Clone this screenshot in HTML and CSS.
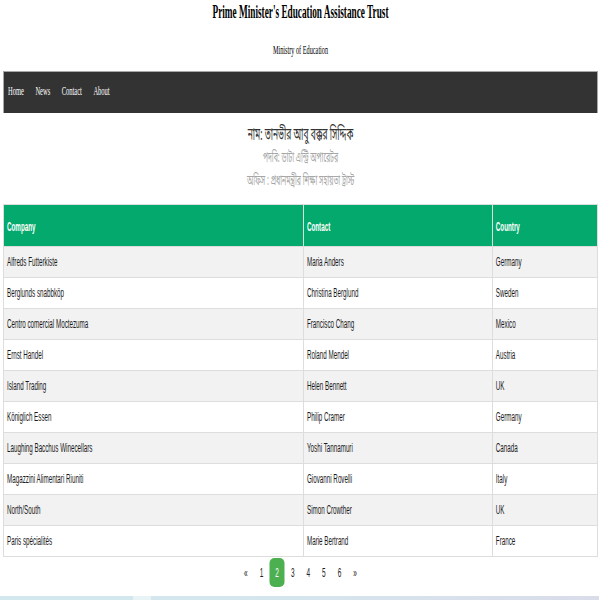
FILE: index.html
```html
<!DOCTYPE html>
<html lang="bn">
<head>
<meta charset="utf-8">
<title>Prime Minister's Education Assistance Trust</title>
<link rel="stylesheet" href="styles.css">
</head>
<body>
<div class="frame">
<div class="page">
  <header class="site-header">
    <h1 class="site-title">Prime Minister's Education Assistance Trust</h1>
    <p class="site-subtitle">Ministry of Education</p>
  </header>
  <nav class="topnav">
    <a href="#">Home</a>
    <a href="#">News</a>
    <a href="#">Contact</a>
    <a href="#">About</a>
  </nav>
  <section class="profile">
    <p class="profile-name">নাম: তানভীর আবু বক্কর সিদ্দিক</p>
    <p class="profile-meta">পদবি: ডাটা এন্ট্রি অপারেটর</p>
    <p class="profile-meta">অফিস : প্রধানমন্ত্রীর শিক্ষা সহায়তা ট্রাস্ট</p>
  </section>
  <table class="customers">
    <colgroup>
      <col class="col-company">
      <col class="col-contact">
      <col class="col-country">
    </colgroup>
    <thead>
      <tr><th>Company</th><th>Contact</th><th>Country</th></tr>
    </thead>
    <tbody>
      <tr><td>Alfreds Futterkiste</td><td>Maria Anders</td><td>Germany</td></tr>
      <tr><td>Berglunds snabbköp</td><td>Christina Berglund</td><td>Sweden</td></tr>
      <tr><td>Centro comercial Moctezuma</td><td>Francisco Chang</td><td>Mexico</td></tr>
      <tr><td>Ernst Handel</td><td>Roland Mendel</td><td>Austria</td></tr>
      <tr><td>Island Trading</td><td>Helen Bennett</td><td>UK</td></tr>
      <tr><td>Königlich Essen</td><td>Philip Cramer</td><td>Germany</td></tr>
      <tr><td>Laughing Bacchus Winecellars</td><td>Yoshi Tannamuri</td><td>Canada</td></tr>
      <tr><td>Magazzini Alimentari Riuniti</td><td>Giovanni Rovelli</td><td>Italy</td></tr>
      <tr><td>North/South</td><td>Simon Crowther</td><td>UK</td></tr>
      <tr><td>Paris spécialités</td><td>Marie Bertrand</td><td>France</td></tr>
    </tbody>
  </table>
  <div class="pagination">
    <a href="#">&laquo;</a>
    <a href="#">1</a>
    <a href="#" class="active">2</a>
    <a href="#">3</a>
    <a href="#">4</a>
    <a href="#">5</a>
    <a href="#">6</a>
    <a href="#">&raquo;</a>
  </div>
  <footer class="site-footer"><span class="footer-seg"></span></footer>
</div>
</div>
</body>
</html>
```

FILE: styles.css
```css
html, body {
  margin: 0;
  padding: 0;
  overflow: hidden;
  background: #fff;
}

.frame {
  width: 600px;
  height: 600px;
  overflow: hidden;
}

/* The page is laid out at double width and squeezed horizontally,
   as the reference shows it. */
.page {
  width: 1198px;
  box-sizing: border-box;
  padding: 0 2px 0 6px;
  transform: scaleX(0.5);
  transform-origin: 0 0;
  font-family: "Liberation Serif", "Times New Roman", serif;
}

.site-header {
  text-align: center;
}

.site-title {
  margin: 0;
  padding-top: 1px;
  font-size: 18.5px;
  line-height: 22px;
  font-weight: bold;
  color: #000;
}

.site-subtitle {
  margin: 20px 0 0;
  font-size: 12.5px;
  line-height: 14px;
  color: #000;
}

.topnav {
  margin-top: 14px;
  height: 42px;
  box-sizing: border-box;
  background: #333;
  border-style: solid;
  border-color: #a8a8a8;
  border-width: 1px 2px 0 2px;
  display: flex;
  align-items: center;
  gap: 23px;
  padding: 0 0 4px 8px;
}

.topnav a {
  color: #fff;
  text-decoration: none;
  font-size: 13px;
  line-height: 16px;
}

.profile {
  margin-top: 11px;
  text-align: center;
  font-family: "Noto Sans Bengali", "Noto Sans", "Liberation Sans", sans-serif;
  line-height: 23px;
}

.profile p {
  margin: 0;
}

.profile-name {
  color: #333;
  font-size: 17px;
}

.profile-meta {
  color: #a6a6a6;
  font-size: 14px;
}

.customers {
  margin-top: 11px;
  width: 100%;
  border-collapse: collapse;
  font-family: "Liberation Sans", Arial, sans-serif;
  font-size: 12.5px;
  color: #1a1a1a;
}

.col-company { width: 50.5%; }
.col-contact { width: 31.8%; }
.col-country { width: 17.7%; }

.customers th,
.customers td {
  border-style: solid;
  border-color: #ddd;
  border-width: 1px 2px;
  text-align: left;
  padding: 0 6px;
  line-height: 15px;
}

.customers th {
  background: #04aa6d;
  color: #fff;
  font-weight: bold;
  height: 42px;
  padding-top: 3px;
  box-sizing: border-box;
}

.customers td {
  height: 30px;
}

.customers tbody tr:nth-child(odd) {
  background: #f2f2f2;
}

.pagination {
  display: flex;
  justify-content: center;
  gap: 1px;
  margin-top: 1px;
  font-family: "Liberation Sans", Arial, sans-serif;
  font-size: 13px;
}

.pagination a {
  color: #222;
  text-decoration: none;
  padding: 8px 11.5px;
  line-height: 13px;
  border-radius: 10px / 5px;
}

.pagination a.active {
  background: #4caf50;
  color: #fff;
}

.site-footer {
  margin-top: 9px;
  margin-left: -6px;
  margin-right: -2px;
  height: 20px;
  background: linear-gradient(90deg, #d2e8ee 0%, #d5e5ee 50%, #dadcea 100%);
}

.footer-seg {
  display: block;
  margin-left: 266px;
  width: 36px;
  height: 20px;
  background: #e8f3f6;
}
```
